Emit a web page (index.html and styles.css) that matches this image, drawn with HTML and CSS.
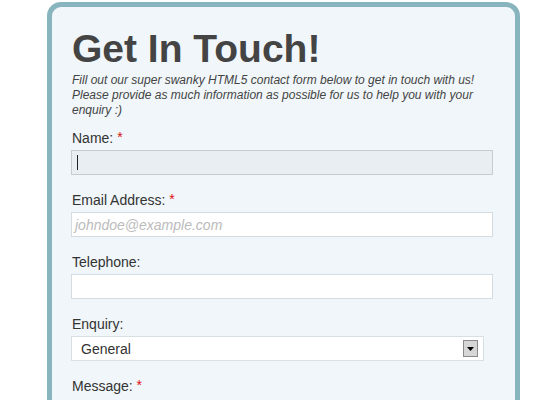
FILE: index.html
```html
<!DOCTYPE html>
<html>
<head>
<meta charset="utf-8">
<link rel="stylesheet" href="styles.css">
</head>
<body>
<div class="card">
  <h1 class="title">Get In Touch!</h1>
  <p class="intro">Fill out our super swanky HTML5 contact form below to get in touch with us! Please provide as much information as possible for us to help you with your enquiry :)</p>

  <div class="field">
    <label class="label">Name: <span class="req">*</span></label>
    <div class="input focused"><span class="caret"></span></div>
  </div>

  <div class="field">
    <label class="label">Email Address: <span class="req">*</span></label>
    <div class="input"><span class="placeholder">johndoe@example.com</span></div>
  </div>

  <div class="field">
    <label class="label">Telephone:</label>
    <div class="input"></div>
  </div>

  <div class="field">
    <label class="label">Enquiry:</label>
    <div class="select">
      <span class="select-text">General</span>
      <span class="select-btn"><svg width="7" height="4" viewBox="0 0 7 4"><polygon points="0,0 7,0 3.5,4" fill="#000"/></svg></span>
    </div>
  </div>

  <div class="field">
    <label class="label">Message: <span class="req">*</span></label>
  </div>
</div>
</body>
</html>
```
FILE: styles.css
```css
html, body {
  margin: 0;
  padding: 0;
  background: #ffffff;
}

body {
  font-family: "Liberation Sans", Arial, sans-serif;
  color: #333;
}

.card {
  box-sizing: border-box;
  margin: 2px 0 0 47px;
  width: 473px;
  height: 420px;
  border: 5px solid #88b4be;
  border-radius: 14px;
  background: #f0f6f9;
  padding: 20px 20px 0 20px;
}

.title {
  margin: 0;
  font-size: 39px;
  line-height: 44px;
  font-weight: bold;
  color: #444;
}

.intro {
  margin: 2px 0 0 0;
  font-size: 12px;
  line-height: 15px;
  font-style: italic;
  color: #444;
  width: 430px;
}

.field {
  display: flex;
  flex-direction: column;
  margin-top: 17px;
}

.field:first-of-type {
  margin-top: 12px;
}

.label {
  font-size: 14px;
  line-height: 17px;
  color: #333;
  margin-bottom: 3px;
}

.req {
  color: #dd1111;
  position: relative;
  top: -1px;
}

.input {
  box-sizing: border-box;
  margin-left: -1px;
  width: 422px;
  height: 25px;
  background: #ffffff;
  border: 1px solid #d3dce1;
  display: flex;
  align-items: center;
  padding-left: 3px;
  font-size: 14px;
}

.input.focused {
  background: #e8eef1;
  border-color: #c4cdd2;
}

.caret {
  display: block;
  margin-left: 2px;
  width: 1px;
  height: 15px;
  background: #222;
}

.placeholder {
  font-style: italic;
  color: #bbbbbb;
}

.select {
  box-sizing: border-box;
  margin-left: -1px;
  width: 413px;
  height: 25px;
  background: #ffffff;
  border: 1px solid #d9e0e4;
  display: flex;
  align-items: center;
  justify-content: space-between;
  padding: 0 5px 0 9px;
  font-size: 14px;
  color: #333;
}

.select-btn {
  box-sizing: border-box;
  width: 15px;
  height: 17px;
  background: #d6d6d6;
  border: 1px solid #8a8a8a;
  display: flex;
  align-items: center;
  justify-content: center;
}
```
